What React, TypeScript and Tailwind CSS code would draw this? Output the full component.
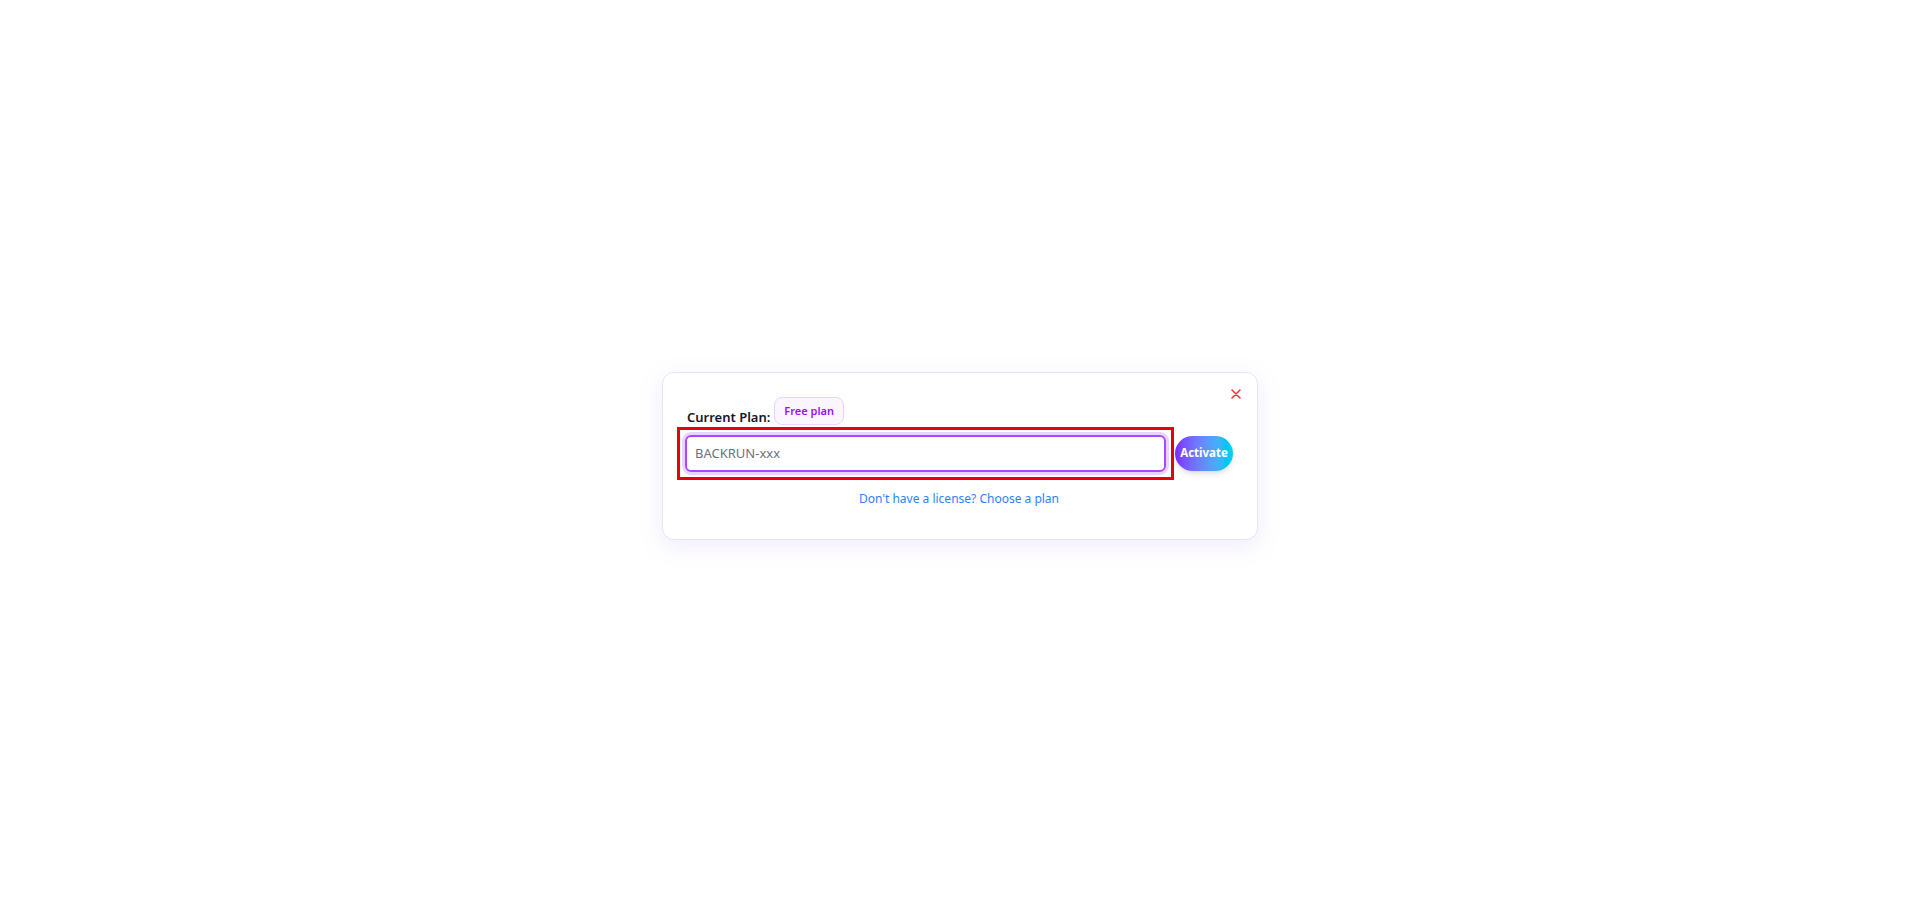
import { useState } from "react";

const LicenseDialog = () => {
    const [license, setLicense] = useState("BACKRUN-xxx");

    return (
        <div className="relative w-[596px] rounded-xl border border-slate-200 bg-white pt-6 pb-8 pl-[22px] pr-6 shadow-[0_6px_24px_rgba(139,92,246,0.13)]">
            <button className="absolute top-4 right-4 text-red-500" aria-label="close">
                <svg width="10" height="10" viewBox="0 0 10 10" fill="none" stroke="currentColor" strokeWidth="1.5" strokeLinecap="round">
                    <path d="M1 1l8 8M9 1l-8 8" />
                </svg>
            </button>
            <div className="flex items-end gap-1 pl-0.5">
                <span className="text-[13px] font-semibold text-gray-900 leading-5 -mb-[2px]">Current Plan:</span>
                <span className="rounded-lg border border-purple-200 bg-purple-50 px-[9px] py-[5px] text-[11px] leading-4 font-semibold text-purple-600">Free plan</span>
            </div>
            <div className="mt-2.5 flex items-center gap-[9px]">
                <div className="-m-2 border-[3px] border-red-600 p-[5px]">
                    <input
                        value={license}
                        onChange={(e) => setLicense(e.target.value)}
                        className="block h-[37px] w-[481px] rounded-md border-2 border-purple-500 px-2 text-[13px] text-gray-500 outline-none ring-[3px] ring-purple-200"
                    />
                </div>
                <button className="h-[35px] w-[59px] rounded-full bg-gradient-to-r from-violet-600 to-cyan-400 text-[11.5px] font-bold text-white shadow-md">
                    Activate
                </button>
            </div>
            <div className="mt-[19px] text-center text-xs text-blue-500">
                <a href="#">Don't have a license? Choose a plan</a>
            </div>
        </div>
    );
};

export default function App() {
    return (
        <div className="flex h-[911px] w-full items-center justify-center bg-white font-['Noto_Sans',sans-serif]">
            <LicenseDialog />
        </div>
    );
}
